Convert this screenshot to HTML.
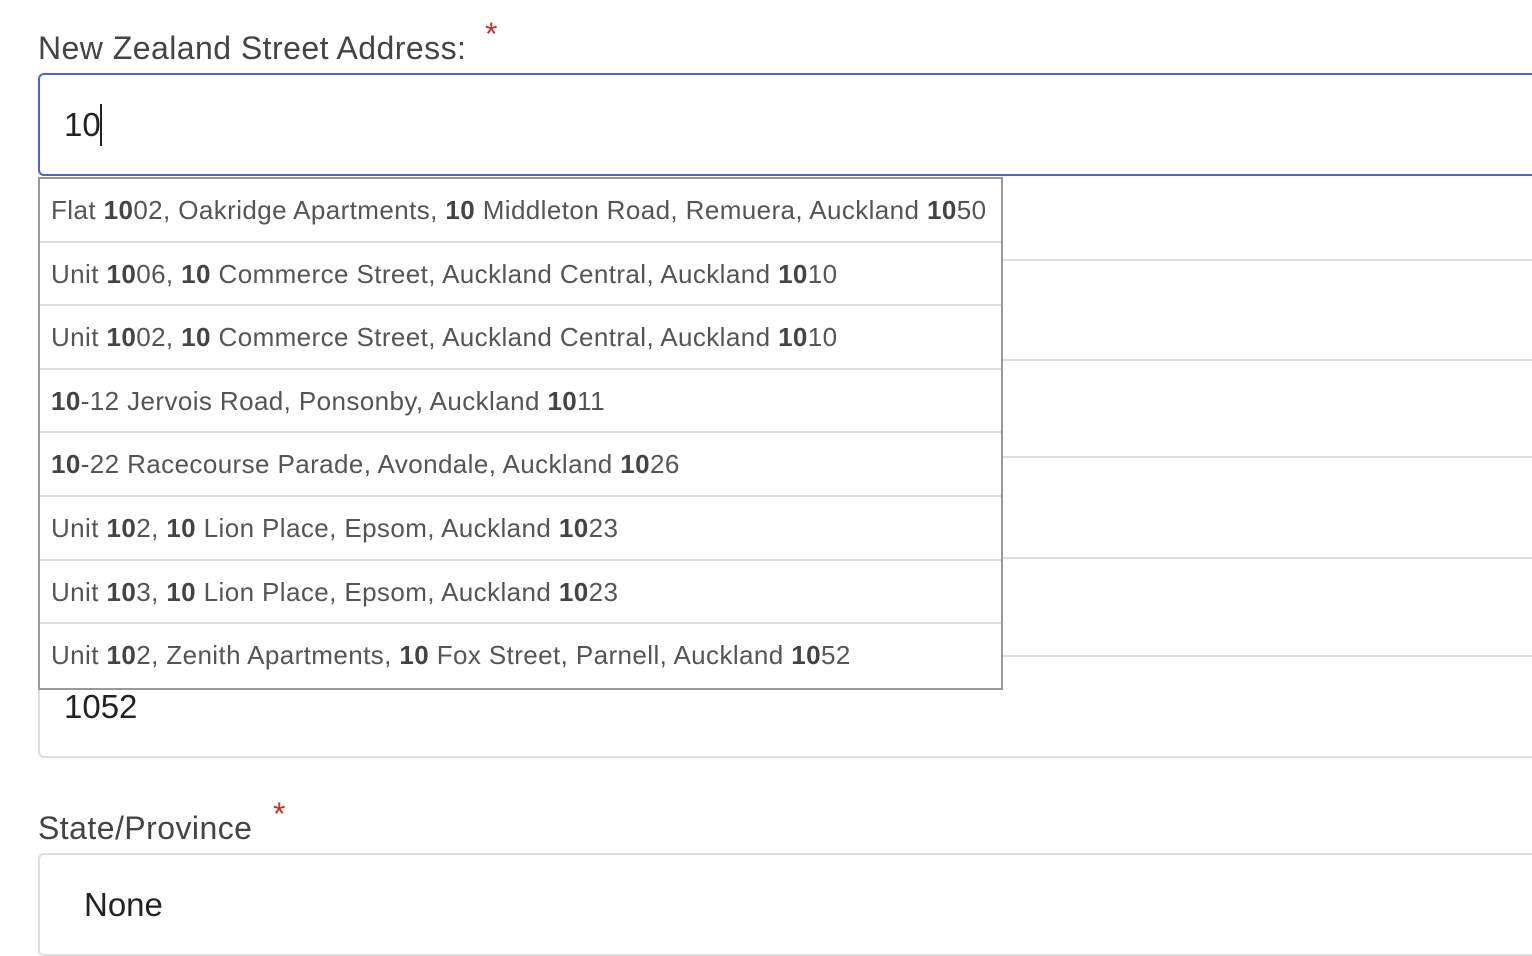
<!DOCTYPE html>
<html><head><style>
*{margin:0;padding:0;box-sizing:border-box}
body{width:1532px;height:894px;overflow:hidden;background:#fff;font-family:"Liberation Sans",sans-serif;position:relative}
.abs{position:absolute}
.lbl{font-size:32px;color:#444;letter-spacing:0.45px}
.star{color:#c9302c;font-size:32px}
.hl{position:absolute;left:1002px;right:0;height:2px;background:#ddd}
.dd{position:absolute;left:38px;top:177px;width:965px;height:513px;border:2px solid #999;background:#fff}
.row{height:63.6px;border-bottom:2px solid #ddd;font-size:26px;color:#555;padding-left:11px;line-height:62px;white-space:nowrap;letter-spacing:0.4px}
.row:last-child{border-bottom:none}
.row b{color:#444}
</style></head><body>
<div class="abs lbl" style="left:38px;top:30px">New Zealand Street Address:</div>
<div class="abs star" style="left:485px;top:16px">*</div>
<div class="abs" style="left:38px;top:73px;width:1510px;height:103px;border:2px solid #4a64d8;border-radius:6px"></div>
<div class="abs" style="left:64px;top:106px;font-size:33px;color:#222">10</div>
<div class="abs" style="left:100px;top:104px;width:2px;height:42px;background:#222"></div>
<div class="hl" style="top:259px"></div>
<div class="hl" style="top:359px"></div>
<div class="hl" style="top:456px"></div>
<div class="hl" style="top:557px"></div>
<div class="hl" style="top:655px"></div>
<div class="abs" style="left:38px;top:655px;width:1510px;height:103px;border:2px solid #ddd;border-radius:6px"></div>
<div class="abs" style="left:64px;top:688px;font-size:33px;color:#222">1052</div>
<div class="abs lbl" style="left:38px;top:810px">State/Province</div>
<div class="abs star" style="left:273px;top:796px">*</div>
<div class="abs" style="left:38px;top:853px;width:1510px;height:103px;border:2px solid #ddd;border-radius:6px"></div>
<div class="abs" style="left:84px;top:886px;font-size:33px;color:#222">None</div>
<div class="dd">
<div class="row">Flat <b>10</b>02, Oakridge Apartments, <b>10</b> Middleton Road, Remuera, Auckland <b>10</b>50</div>
<div class="row">Unit <b>10</b>06, <b>10</b> Commerce Street, Auckland Central, Auckland <b>10</b>10</div>
<div class="row">Unit <b>10</b>02, <b>10</b> Commerce Street, Auckland Central, Auckland <b>10</b>10</div>
<div class="row"><b>10</b>-12 Jervois Road, Ponsonby, Auckland <b>10</b>11</div>
<div class="row"><b>10</b>-22 Racecourse Parade, Avondale, Auckland <b>10</b>26</div>
<div class="row">Unit <b>10</b>2, <b>10</b> Lion Place, Epsom, Auckland <b>10</b>23</div>
<div class="row">Unit <b>10</b>3, <b>10</b> Lion Place, Epsom, Auckland <b>10</b>23</div>
<div class="row">Unit <b>10</b>2, Zenith Apartments, <b>10</b> Fox Street, Parnell, Auckland <b>10</b>52</div>
</div>
</body></html>
